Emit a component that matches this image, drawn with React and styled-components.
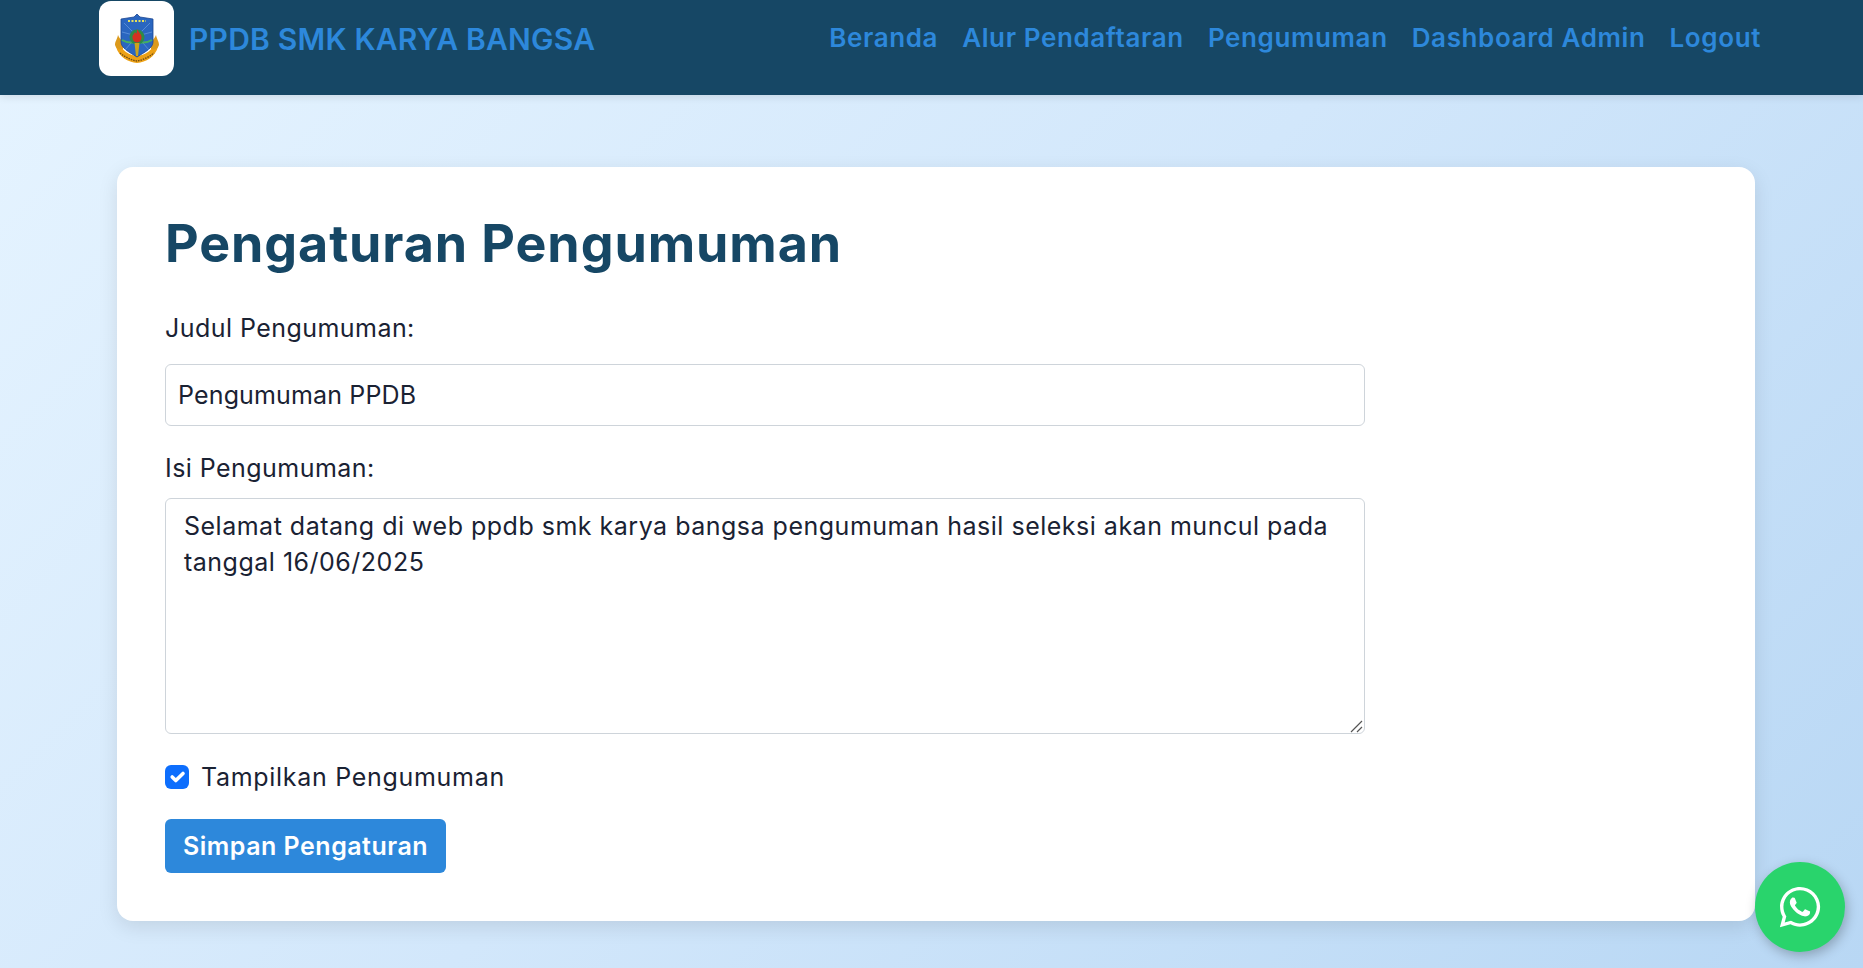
import React from "react"
import styled, { createGlobalStyle } from "styled-components"
import { FaWhatsapp } from "react-icons/fa"

const GlobalStyle = createGlobalStyle`
  * {
    box-sizing: border-box;
  }
  html, body {
    margin: 0;
    height: 100%;
  }
  body {
    font-family: "Inter", "Open Sans", sans-serif;
    color: #1a2233;
    overflow: hidden;
  }
`

const checkIcon = `url("data:image/svg+xml,%3csvg xmlns='http://www.w3.org/2000/svg' viewBox='0 0 20 20'%3e%3cpath fill='none' stroke='%23fff' stroke-linecap='round' stroke-linejoin='round' stroke-width='3' d='m6 10 3 3 6-6'/%3e%3c/svg%3e")`
const resizerIcon = `url("data:image/svg+xml,%3csvg xmlns='http://www.w3.org/2000/svg' viewBox='0 0 14 14'%3e%3cpath fill='none' stroke='%23555' stroke-width='1.2' d='M1 13 12 2M7 13l5-5'/%3e%3c/svg%3e")`

const Page = styled.div`
  height: 968px;
  overflow: hidden;
  background: linear-gradient(135deg, #e6f4ff 0%, #d2e7fb 50%, #b8d7f4 100%);
`

const Header = styled.header`
  height: 95px;
  background-color: #164765;
  box-shadow: 0 2px 8px rgba(0, 0, 0, 0.1);
  display: flex;
  justify-content: space-between;
  padding: 1px 102px 0 99px;
`

const Brand = styled.div`
  display: flex;
  align-items: flex-start;
  gap: 15px;
`

const LogoBox = styled.div`
  width: 75px;
  height: 75px;
  background-color: #fff;
  border-radius: 12px;
  display: flex;
  align-items: center;
  justify-content: center;
`

const BrandName = styled.div`
  font-size: 30px;
  font-weight: 600;
  letter-spacing: 0.22px;
  line-height: 36px;
  color: #2d88db;
  margin-top: 20px;
`

const Nav = styled.nav`
  display: flex;
  gap: 24px;
  margin-top: 21px;
`

const NavLink = styled.a`
  font-size: 26px;
  font-weight: 600;
  letter-spacing: 0.62px;
  line-height: 32px;
  color: #2d88db;
  white-space: nowrap;
`

const Main = styled.main`
  padding: 72px 108px 0 117px;
`

const Card = styled.section`
  height: 754px;
  background-color: #fff;
  border-radius: 16px;
  box-shadow: 0 6px 20px rgba(0, 0, 0, 0.1);
  padding: 48px;
`

const Title = styled.h1`
  margin: 0 0 37px;
  font-size: 52px;
  line-height: 58px;
  letter-spacing: 0.9px;
  font-weight: 700;
  color: #164765;
`

const Form = styled.form`
  width: 1200px;
  display: flex;
  flex-direction: column;
`

const Label = styled.label`
  font-size: 25px;
  line-height: 36px;
  letter-spacing: 0.45px;
  margin-bottom: ${(props) => props.$gap}px;
`

const TextInput = styled.input`
  width: 100%;
  height: 62px;
  padding: 0 12px;
  border: 1px solid #ced4da;
  border-radius: 6px;
  font: inherit;
  font-size: 25px;
  letter-spacing: 0.15px;
  color: #1a2233;
  margin-bottom: 24px;
`

const TextArea = styled.textarea`
  width: 100%;
  height: 236px;
  padding: 9px 18px;
  border: 1px solid #ced4da;
  border-radius: 6px;
  font: inherit;
  font-size: 25px;
  line-height: 36px;
  letter-spacing: 0.5px;
  color: #1a2233;
  resize: vertical;
  margin-bottom: 25px;
  display: block;
  &::-webkit-resizer {
    background: ${resizerIcon} no-repeat center / 14px 14px;
  }
`

const CheckRow = styled.div`
  display: flex;
  align-items: center;
  gap: 12px;
  margin-bottom: 24px;
`

const CheckBox = styled.input`
  appearance: none;
  width: 24px;
  height: 24px;
  margin: 0;
  border-radius: 6px;
  background: #0d6efd ${checkIcon} no-repeat center / 100% 100%;
`

const CheckLabel = styled.label`
  font-size: 25px;
  line-height: 36px;
  letter-spacing: 0.7px;
`

const SaveButton = styled.button`
  align-self: flex-start;
  height: 54px;
  padding: 0 18px;
  border: none;
  border-radius: 6px;
  background-color: #2d88db;
  color: #fff;
  font: inherit;
  font-size: 25px;
  font-weight: 600;
  letter-spacing: 0.5px;
`

const WhatsappButton = styled.a`
  position: fixed;
  right: 18px;
  bottom: 16px;
  width: 90px;
  height: 90px;
  border-radius: 50%;
  background-color: #29d46c;
  box-shadow: 2px 4px 12px rgba(0, 0, 0, 0.25);
  display: flex;
  align-items: center;
  justify-content: center;
  color: #fff;
  font-size: 46px;
`

const navItems = ["Beranda", "Alur Pendaftaran", "Pengumuman", "Dashboard Admin", "Logout"]

const SchoolLogo = () => (
  <svg width="46" height="50" viewBox="0 0 46 50">
    <path d="M4 28c4 9 11 13 19 14 8-1 15-5 19-14l2 5c-3 10-12 15-21 16C14 48 5 43 2 33z" fill="#eda114" />
    <path d="M1 31c0-4 2-5 3-10 1 3 3 5 6 7l-1 7c-3 1-7 0-8-4zM45 31c0-4-2-5-3-10-1 3-3 5-6 7l1 7c3 1 7 0 8-4z" fill="#dc9a1c" />
    <path d="M7 5l13-2 3-3 3 3 13 2v23c0 6-8 10-16 15C15 38 7 34 7 28z" fill="#2a66c0" stroke="#1d4690" strokeWidth="0.8" />
    <path d="M14 7h18" stroke="#e8e05a" strokeWidth="2" strokeDasharray="2 1.500" />
    <path d="M23 22L10 9M23 22L36 9M23 22L8 18M23 22L38 18M23 22L11 36M23 22L35 36" stroke="#6a9be0" strokeWidth="0.7" />
    <path d="M8 26c5 3 9 3 13 2M38 26c-5 3-9 3-13 2" stroke="#45b060" strokeWidth="2" fill="none" />
    <circle cx="23" cy="23" r="7.500" fill="#2f8a48" />
    <path d="M23 15c1 3 5 5 4.500 9-.5 3-2.500 4.500-4.500 4.500s-4-1.500-4.500-4.500c-.5-3 2-4 2.500-6 .5 1 1 1.500 1.500 1.500.5-1.500.5-2.500.5-4.500z" fill="#d5301f" />
    <path d="M20.500 29h5l-1.500 13h-2z" fill="#c9a41e" />
    <path d="M6 39c5 4 11 7 17 8 6-1 12-4 17-8" stroke="#6e4a12" strokeWidth="1.300" strokeDasharray="1.500 1" fill="none" />
  </svg>
)

const App = () => {
  return (
    <Page>
      <GlobalStyle />
      <Header>
        <Brand>
          <LogoBox>
            <SchoolLogo />
          </LogoBox>
          <BrandName>PPDB SMK KARYA BANGSA</BrandName>
        </Brand>
        <Nav>
          {navItems.map((item) => (
            <NavLink key={item}>{item}</NavLink>
          ))}
        </Nav>
      </Header>
      <Main>
        <Card>
          <Title>Pengaturan Pengumuman</Title>
          <Form>
            <Label htmlFor="judul" $gap={18}>Judul Pengumuman:</Label>
            <TextInput id="judul" defaultValue="Pengumuman PPDB" />
            <Label htmlFor="isi" $gap={12}>Isi Pengumuman:</Label>
            <TextArea
              id="isi"
              defaultValue="Selamat datang di web ppdb smk karya bangsa pengumuman hasil seleksi akan muncul pada tanggal 16/06/2025"
            />
            <CheckRow>
              <CheckBox id="tampil" type="checkbox" defaultChecked />
              <CheckLabel htmlFor="tampil">Tampilkan Pengumuman</CheckLabel>
            </CheckRow>
            <SaveButton type="button">Simpan Pengaturan</SaveButton>
          </Form>
        </Card>
      </Main>
      <WhatsappButton>
        <FaWhatsapp />
      </WhatsappButton>
    </Page>
  )
}

export default App
